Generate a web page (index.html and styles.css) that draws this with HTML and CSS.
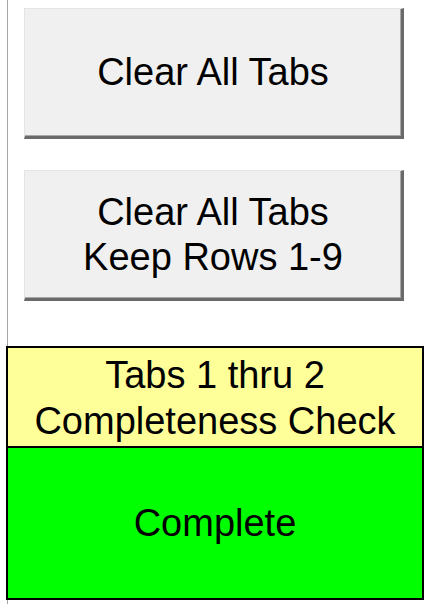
FILE: index.html
```html
<!DOCTYPE html>
<html lang="en">

<head>
    <meta charset="UTF-8" />
    <meta name="viewport" content="width=device-width, initial-scale=1.0" />
    <title>Tabs | Completeness</title>
    <link rel="stylesheet" href="styles.css">
</head>

<body>
    <div class="sheet">
        <div class="buttons">
            <button class="macro-btn">Clear All Tabs</button>
            <button class="macro-btn">Clear All Tabs<br>Keep Rows 1-9</button>
        </div>

        <div class="check-box">
            <div class="check-title">Tabs 1 thru 2<br>Completeness Check</div>
            <div class="check-status">Complete</div>
        </div>
    </div>
</body>

</html>
```

FILE: styles.css
```css
body {
    margin: 0;
    font-family: "Liberation Sans", Arial, sans-serif;
    background: white;
}

.sheet {
    margin-left: 7px;
    border-left: 1px solid #a6a6a6;
    height: 604px;
    box-sizing: border-box;
    padding-top: 8px;
}

.buttons {
    display: flex;
    flex-direction: column;
    gap: 31px;
    padding-left: 16px;
}

.macro-btn {
    width: 380px;
    height: 131px;
    background: #f0f0f0;
    border: 1px solid #e4e4e4;
    border-right: 3px solid #6a6a6a;
    border-bottom: 3px solid #6a6a6a;
    box-shadow: inset -1px -1px 0 #a8a8a8;
    font-family: "Liberation Sans", Arial, sans-serif;
    font-size: 38px;
    line-height: 45px;
    color: black;
    padding: 0;
}

.check-box {
    margin: 45px 0 0 -2px;
    width: 418px;
    border: 2px solid black;
    box-sizing: border-box;
    text-align: center;
    font-size: 38px;
    line-height: 46px;
}

.check-title {
    background: #ffff99;
    height: 100px;
    padding-top: 4px;
    box-sizing: border-box;
    border-bottom: 2px solid black;
}

.check-status {
    background: #00ff00;
    height: 150px;
    display: flex;
    align-items: center;
    justify-content: center;
}
```
